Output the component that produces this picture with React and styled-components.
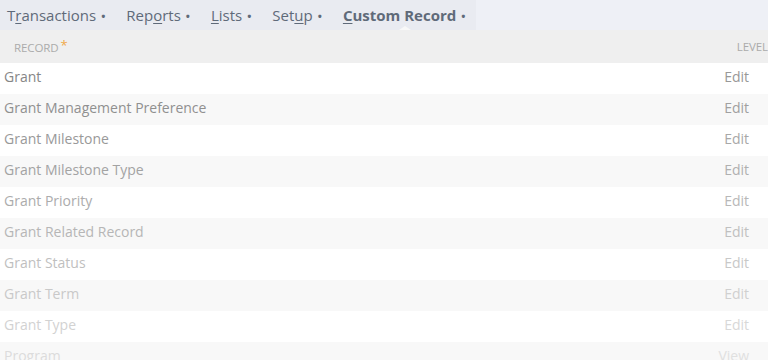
import styled, { createGlobalStyle } from 'styled-components';

const GlobalStyle = createGlobalStyle`
  html, body {
    margin: 0;
    padding: 0;
    background: #ffffff;
    font-family: 'Open Sans', 'Liberation Sans', sans-serif;
  }
`;

const Page = styled.div`
  width: 768px;
  height: 360px;
  overflow: hidden;
  background: #ffffff;
`;

const NavBar = styled.div`
  display: flex;
  height: 30px;
  background: #eef0f6;
`;

const NavTabs = styled.div`
  display: flex;
  align-items: center;
  width: 476px;
  background: #e9ebf1;
  padding-left: 7px;
  box-sizing: border-box;
`;

const NavItem = styled.div`
  position: relative;
  display: flex;
  align-items: center;
  height: 30px;
  font-size: 15px;
  color: #5f6a79;
  font-weight: ${({ $active }) => ($active ? 700 : 400)};
  margin-right: ${({ $gap }) => $gap}px;

  u {
    text-decoration-thickness: 1px;
    text-underline-offset: 2px;
  }

  &::after {
    content: '';
    display: ${({ $active }) => ($active ? 'block' : 'none')};
    position: absolute;
    left: 56px;
    bottom: 0;
    border-left: 6px solid transparent;
    border-right: 6px solid transparent;
    border-bottom: 4px solid #f8f8f8;
  }
`;

const Dot = styled.span`
  font-size: 11px;
  margin-left: 5px;
  font-weight: 700;
`;

const HeaderRow = styled.div`
  display: flex;
  align-items: center;
  justify-content: space-between;
  height: 33px;
  padding: 0 0 0 14px;
  background: #efefef;
  font-size: 11.5px;
  color: #ababab;
  letter-spacing: -0.1px;
`;

const Asterisk = styled.span`
  color: #f0a94a;
  font-size: 13px;
  margin-left: 2px;
  position: relative;
  top: -2px;
`;

const Row = styled.div`
  display: flex;
  align-items: center;
  justify-content: space-between;
  height: 31px;
  padding: 0 19px 4px 4px;
  box-sizing: border-box;
  font-size: 14px;
  background: ${({ $odd }) => ($odd ? '#f8f8f8' : '#ffffff')};
  color: ${({ $index }) => {
    const v = Math.round(0x86 + $index * 9.5);
    return `rgb(${v},${v},${v})`;
  }};
`;

const Action = styled.span`
  color: ${({ $index }) => {
    const v = Math.round(0x98 + $index * 8);
    return `rgb(${v},${v},${v})`;
  }};
`;

const navItems = [
  { pre: 'T', u: 'r', post: 'ansactions', gap: 21 },
  { pre: 'Rep', u: 'o', post: 'rts', gap: 21 },
  { pre: '', u: 'L', post: 'ists', gap: 21 },
  { pre: 'Set', u: 'u', post: 'p', gap: 21 },
  { pre: '', u: 'C', post: 'ustom Record', gap: 0, active: true },
];

const records = [
  ['Grant', 'Edit'],
  ['Grant Management Preference', 'Edit'],
  ['Grant Milestone', 'Edit'],
  ['Grant Milestone Type', 'Edit'],
  ['Grant Priority', 'Edit'],
  ['Grant Related Record', 'Edit'],
  ['Grant Status', 'Edit'],
  ['Grant Term', 'Edit'],
  ['Grant Type', 'Edit'],
  ['Program', 'View'],
];

export default function App() {
  return (
    <Page>
      <GlobalStyle />
      <NavBar>
        <NavTabs>
          {navItems.map((n, i) => (
            <NavItem key={i} $gap={n.gap} $active={n.active}>
              {n.pre}
              <u>{n.u}</u>
              {n.post}
              <Dot>•</Dot>
            </NavItem>
          ))}
        </NavTabs>
      </NavBar>
      <HeaderRow>
        <span>
          RECORD<Asterisk>*</Asterisk>
        </span>
        <span>LEVEL</span>
      </HeaderRow>
      {records.map(([name, action], i) => (
        <Row key={name} $odd={i % 2 === 1} $index={i}>
          <span>{name}</span>
          <Action $index={i}>{action}</Action>
        </Row>
      ))}
    </Page>
  );
}
